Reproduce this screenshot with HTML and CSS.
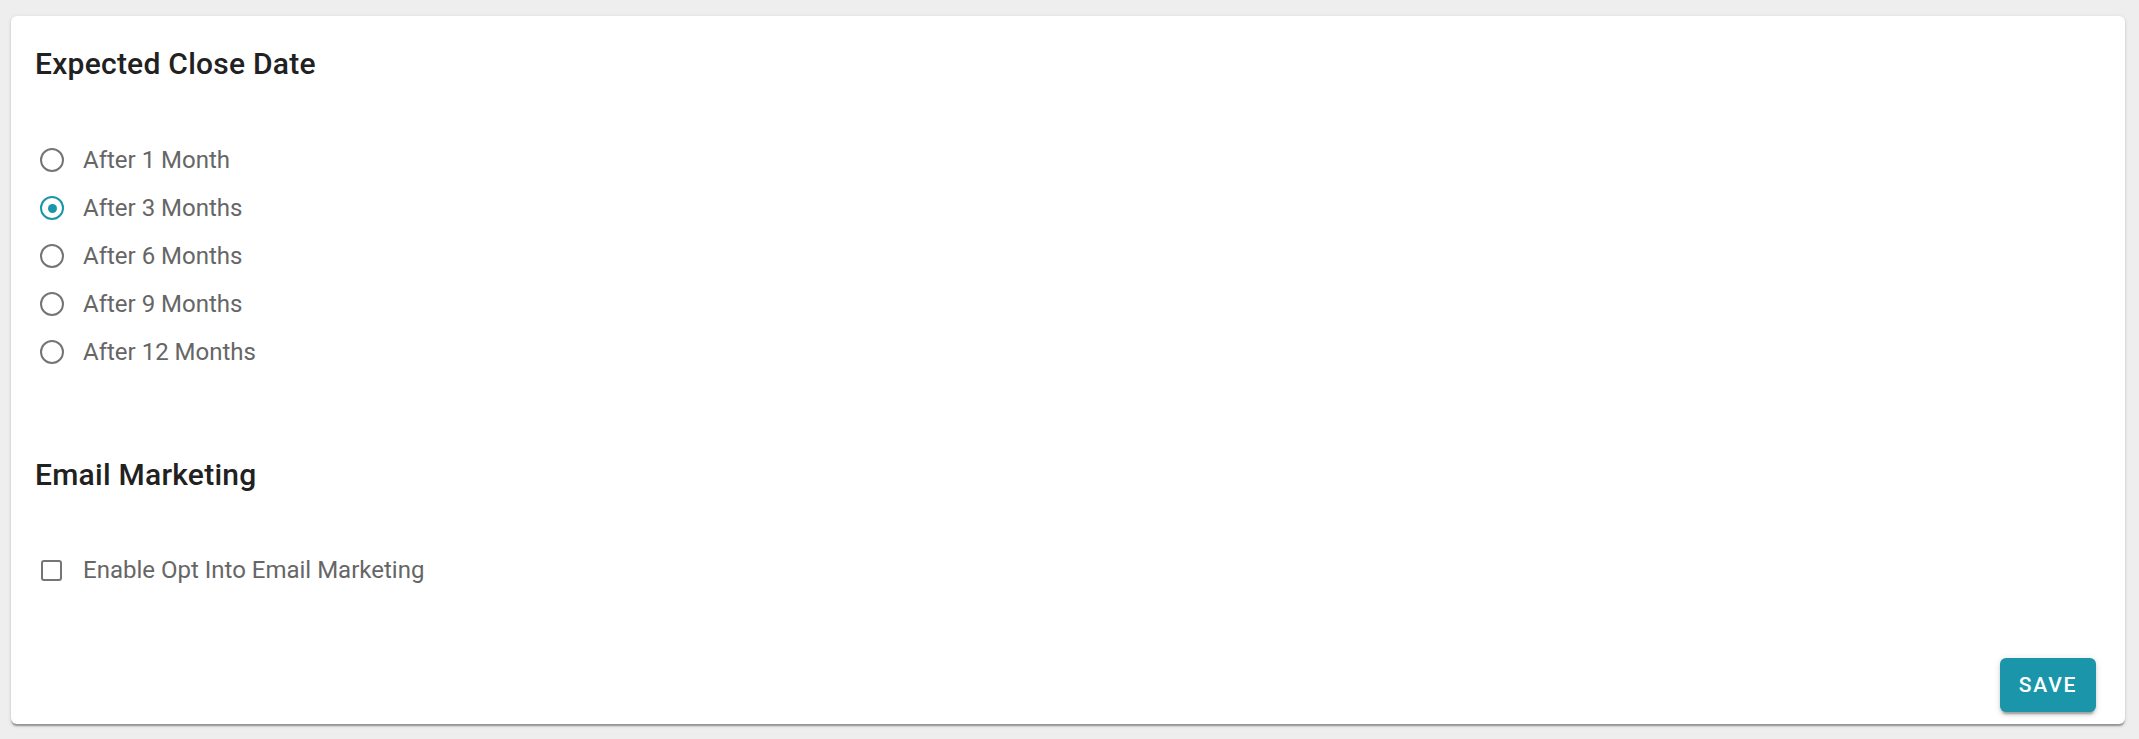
FILE: index.html
```html
<!DOCTYPE html>
<html lang="en">
<head>
<meta charset="utf-8">
<title>Settings</title>
<link rel="stylesheet" href="styles.css">
</head>
<body>
<div class="card">
  <h2 class="section-title">Expected Close Date</h2>
  <div class="radio-group">
    <label class="option"><span class="radio"></span><span class="label">After 1 Month</span></label>
    <label class="option"><span class="radio checked"></span><span class="label">After 3 Months</span></label>
    <label class="option"><span class="radio"></span><span class="label">After 6 Months</span></label>
    <label class="option"><span class="radio"></span><span class="label">After 9 Months</span></label>
    <label class="option"><span class="radio"></span><span class="label">After 12 Months</span></label>
  </div>
  <h2 class="section-title second">Email Marketing</h2>
  <label class="option check-row"><span class="checkbox"></span><span class="label">Enable Opt Into Email Marketing</span></label>
  <div class="actions">
    <button class="save-btn">SAVE</button>
  </div>
</div>
</body>
</html>
```

FILE: styles.css
```css
* { box-sizing: border-box; }
html, body { margin: 0; height: 100%; }
body {
  background: #eeeeee;
  padding: 16px 14px 0 11px;
  font-family: Roboto, "Noto Sans", "Liberation Sans", sans-serif;
}
.card {
  background: #fff;
  border-radius: 6px;
  height: 708px;
  padding: 24px 29px 12px 24px;
  box-shadow: 0 3px 1.5px -1.5px rgba(0,0,0,.2), 0 1.5px 1.5px 0 rgba(0,0,0,.14), 0 1.5px 4.5px 0 rgba(0,0,0,.12);
  display: flex;
  flex-direction: column;
}
.section-title {
  margin: 0;
  font-size: 30px;
  font-weight: 500;
  line-height: 48px;
  color: #212121;
  letter-spacing: 0.25px;
}
.radio-group {
  margin-top: 48px;
  display: flex;
  flex-direction: column;
}
.option {
  display: flex;
  align-items: center;
  height: 48px;
  padding-left: 5px;
}
.label {
  font-size: 24px;
  color: #666666;
  margin-left: 19px;
  letter-spacing: 0;
}
.radio {
  width: 24px;
  height: 24px;
  border: 2px solid #757575;
  border-radius: 50%;
  display: flex;
  align-items: center;
  justify-content: center;
  flex: none;
}
.radio.checked { border-color: #1a96aa; }
.radio.checked::after {
  content: "";
  width: 9px;
  height: 9px;
  border-radius: 50%;
  background: #1a96aa;
}
.section-title.second { margin-top: 75px; }
.check-row { margin-top: 47px; height: 48px; }
.checkbox {
  width: 21px;
  height: 21px;
  border: 2px solid #757575;
  border-radius: 3px;
  flex: none;
  margin-left: 1px;
  margin-right: 2px;
}
.actions {
  margin-top: auto;
  display: flex;
  justify-content: flex-end;
}
.save-btn {
  width: 96px;
  height: 54px;
  border: none;
  border-radius: 6px;
  background: #1a95aa;
  color: #fff;
  font-family: Roboto, "Noto Sans", sans-serif;
  font-size: 21px;
  font-weight: 500;
  letter-spacing: 1.8px;
  padding: 0;
  box-shadow: 0 4.5px 1.5px -3px rgba(0,0,0,.2), 0 3px 3px 0 rgba(0,0,0,.14), 0 1.5px 7.5px 0 rgba(0,0,0,.12);
}
```
